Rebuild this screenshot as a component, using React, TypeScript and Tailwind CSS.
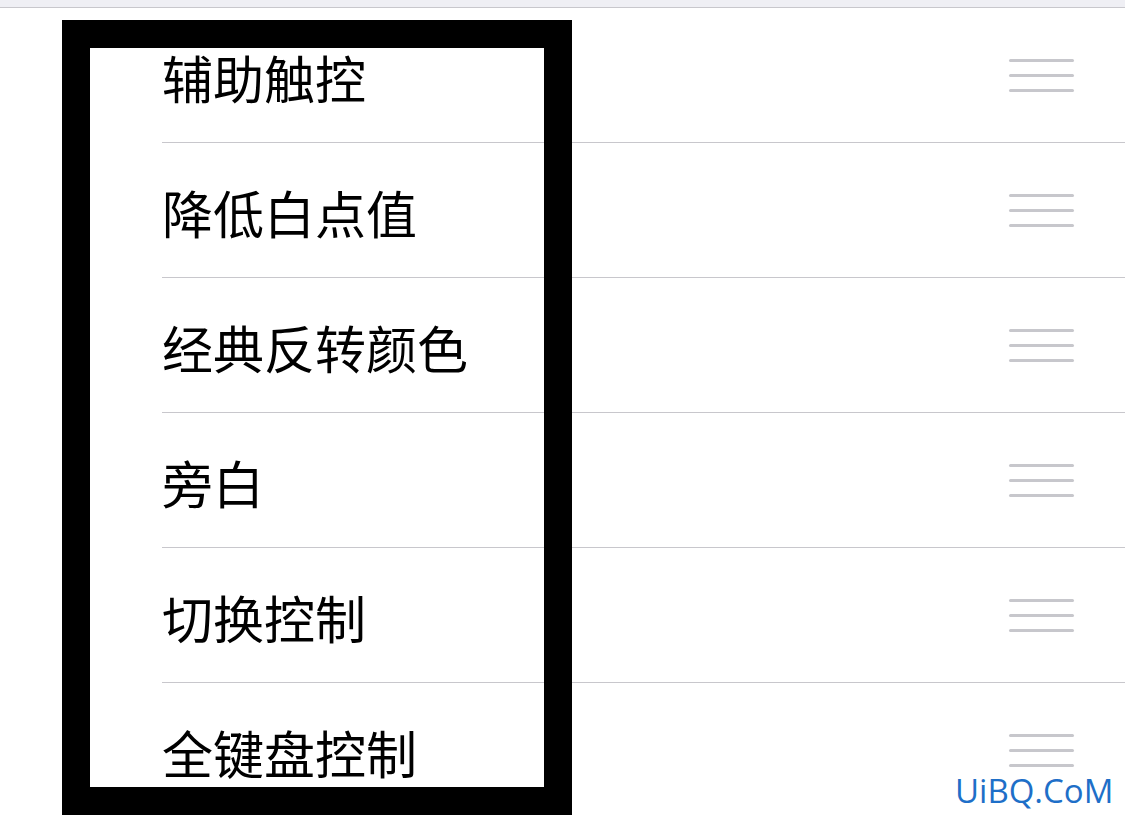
import React from 'react';

const items = ['辅助触控', '降低白点值', '经典反转颜色', '旁白', '切换控制', '全键盘控制'];

const DragHandle: React.FC = () => (
    <div className="flex w-[65px] flex-col gap-[12px]">
        <div className="h-[3px] rounded-full bg-[#c7c7cc]" />
        <div className="h-[3px] rounded-full bg-[#c7c7cc]" />
        <div className="h-[3px] rounded-full bg-[#c7c7cc]" />
    </div>
);

const App: React.FC = () => {
    return (
        <div
            className="relative h-[817px] w-[1125px] overflow-hidden bg-white"
            style={{ fontFamily: '"Noto Sans CJK SC", "Noto Sans", sans-serif' }}
        >
            <div className="h-[8px] border-b border-[#c8c7cc] bg-[#efeff4]" />

            <div className="pl-[162px]">
                {items.map((label, i) => (
                    <div
                        key={i}
                        className={`flex h-[135px] items-center justify-between pr-[51px] ${
                            i < items.length - 1 ? 'border-b border-[#c8c7cc]' : ''
                        } ${i === 0 ? 'h-[134px]' : ''}`}
                    >
                        <span className="pt-[4px] text-[51px] leading-none text-black">{label}</span>
                        <DragHandle />
                    </div>
                ))}
            </div>

            {/* annotation frame */}
            <div className="pointer-events-none absolute left-[62px] top-[20px] h-[795px] w-[510px] border-[28px] border-black" />

            <div
                className="absolute left-[955px] top-[774px] text-[33px] leading-none text-[#1e6fc8]"
                style={{ fontFamily: '"Open Sans", sans-serif' }}
            >
                UiBQ.CoM
            </div>
        </div>
    );
};

export default App;
